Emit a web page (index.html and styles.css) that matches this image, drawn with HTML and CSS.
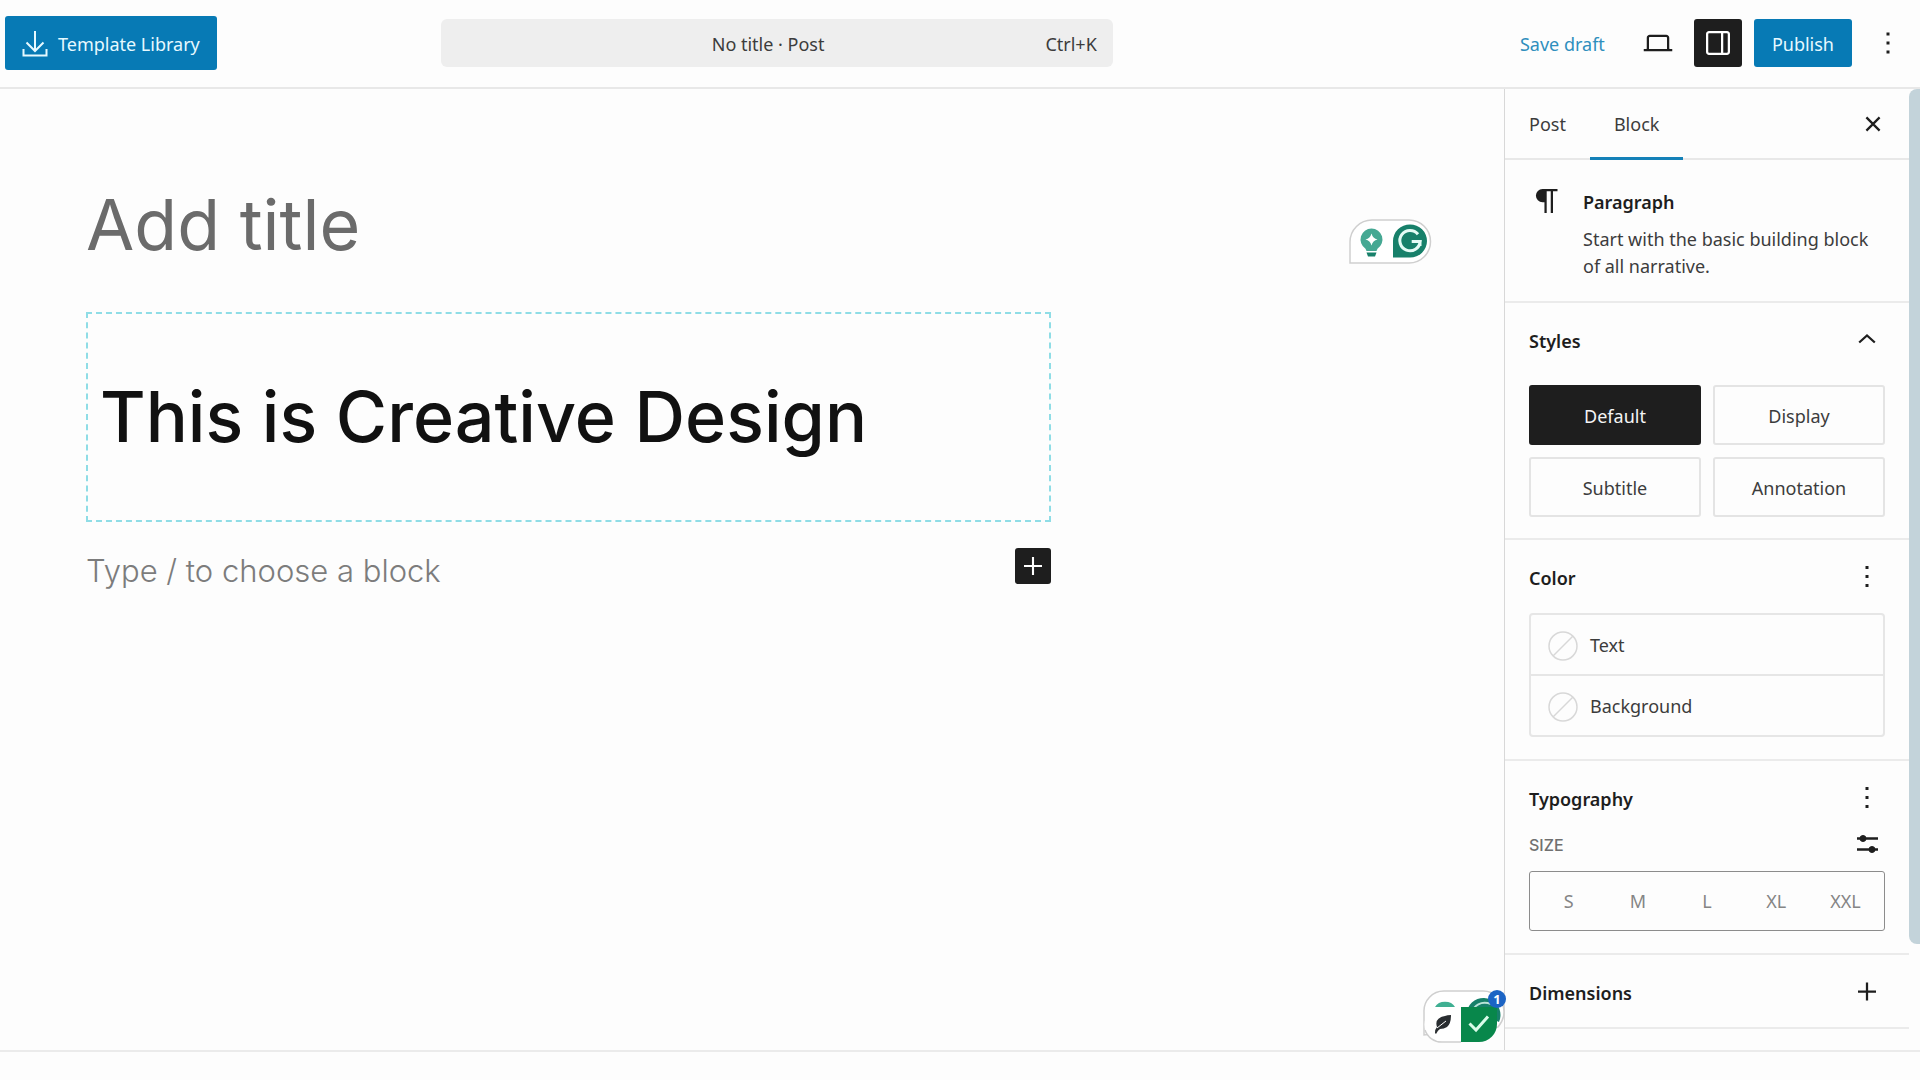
FILE: index.html
```html
<!DOCTYPE html>
<html lang="en">
<head>
	<meta charset="UTF-8">
	<title>Edit Post</title>
	<link rel="stylesheet" href="styles.css">
</head>
<body>
	<header class="header">
		<button class="btn btn-library">
			<svg width="26" height="28" viewBox="0 0 26 28" fill="none" stroke="currentColor" stroke-width="2"><path d="M13 0v20M4.500 11.500 13 20l8.500-8.500M1.500 18v6.500h23V18"/></svg>
			Template Library
		</button>
		<button class="search">
			<span class="search-title">No title · Post</span>
			<span>Ctrl+K</span>
		</button>
		<div class="actions">
			<button class="save">Save draft</button>
			<button class="icon-btn" aria-label="View">
				<svg width="36" height="36" viewBox="0 0 24 24"><path fill="currentColor" d="M20.500 16h-.7c-.1 0-.3-.1-.3-.3V8.500c0-1.100-.9-2-2-2h-11c-1.100 0-2 .9-2 2v7.200c0 .2-.1.3-.3.3h-1.700v1.500h19V16h-1zM6 8.500c0-.3.200-.5.500-.5h11c.3 0 .5.200.5.500v7.200c0 .1 0 .2 0 .3H6V8.500z"/></svg>
			</button>
			<button class="icon-btn dark" aria-label="Settings">
				<svg width="36" height="36" viewBox="0 0 24 24"><path fill="currentColor" fill-rule="evenodd" d="M18 4H6c-1.100 0-2 .9-2 2v12c0 1.100.9 2 2 2h12c1.100 0 2-.9 2-2V6c0-1.100-.9-2-2-2zm-4 14.500H6c-.3 0-.5-.2-.5-.5V6c0-.3.200-.5.500-.5h8v13zm4.500-.5c0 .3-.2.5-.5.500h-2.500v-13H18c.3 0 .5.200.5.500v12z"/></svg>
			</button>
			<button class="btn">Publish</button>
			<button class="icon-btn" aria-label="Options">
				<svg width="36" height="36" viewBox="0 0 24 24"><path fill="currentColor" d="M11 5h2v2h-2zM11 11h2v2h-2zM11 17h2v2h-2z"/></svg>
			</button>
		</div>
	</header>

	<div class="body">
		<main class="canvas">
			<div class="post">
				<input class="post-title" type="text" placeholder="Add title" aria-label="Add title">
				<div class="text-block">
					<p class="creative" contenteditable="true" spellcheck="false">This is Creative Design</p>
				</div>
				<div class="appender">
					<input class="appender-text" type="text" placeholder="Type / to choose a block" aria-label="Add block">
					<button class="add" aria-label="Add block">
						<svg width="36" height="36" viewBox="0 0 24 24"><path fill="currentColor" d="M11.300 6h1.400v5.300H18v1.400h-5.300V18h-1.400v-5.300H6v-1.400h5.300z"/></svg>
					</button>
				</div>
			</div>

			<!-- writing assistant, floats over the canvas -->
			<div class="assist assist-top">
				<svg width="84" height="46" viewBox="0 0 84 46">
					<path d="M1 44V23A22 22 0 0 1 23 1H60a21.500 21.500 0 0 1 0 43z" fill="#fff" stroke="#cfcfcf" stroke-width="1.500"/>
					<path d="M22.500 9.500a11 11 0 0 1 6 20.200l-1 2.300H17.500l-1-2.300a11 11 0 0 1 6-20.200z" fill="#45a893"/>
					<path d="M17.500 33.500h10l-1.500 4h-7z" fill="#17806a"/>
					<path d="M22.500 14.500q1.300 5 6 6-4.700 1-6 6-1.300-5-6-6 4.700-1 6-6z" fill="#fff"/>
					<path d="M44 38.500V22a17 16.500 0 1 1 17 16.500z" fill="#17806a"/>
					<path d="M69 15.200a10.200 10.200 0 1 0 2.200 7.300h-8.500M71 22.500V27" fill="none" stroke="#e4fbf5" stroke-width="3"/>
				</svg>
			</div>
			<div class="assist assist-bottom">
				<svg width="84" height="54" viewBox="0 0 84 54">
					<path d="M1 45V22A20 20 0 0 1 21 1H60a21 21 0 0 1 21 21q0 8-6 15z" fill="#fff" stroke="#cfcfcf" stroke-width="1.500"/>
					<path d="M12 17a11 9 0 0 1 20 0z" fill="#3faf92"/>
					<path d="M45 18a17 17 0 0 1 31 14z" fill="#17806a"/>
					<path d="M50 19q7-9 18-5" fill="none" stroke="#b9e3d8" stroke-width="2"/>
					<path d="M38 17H19a17.500 17.500 0 0 0 0 35h19z" fill="#fff"/>
					<path d="M2 40a17.500 17.500 0 0 0 17 12h19" fill="none" stroke="#cfcfcf" stroke-width="1.500"/>
					<path d="M38 17h36v17a18 18 0 0 1-18 18H38z" fill="#08874b"/>
					<path d="M46.500 33.500l6.500 6.500 12-13.500" fill="none" stroke="#d9fbe9" stroke-width="3"/>
					<path d="M12 43q0-4 2-6-3-9 8-11 2-1 6-1 0 9-4 12-3 2-7 2-2 1-4 5z" fill="#292d30"/>
					<path d="M14 38l9-7" stroke="#fff" stroke-width="1"/>
				</svg>
				<span class="badge">1</span>
			</div>
		</main>

		<aside class="sidebar">
			<div class="tabs">
				<button class="tab">Post</button>
				<button class="tab active">Block</button>
				<button class="icon-btn close" aria-label="Close Settings">
					<svg width="36" height="36" viewBox="0 0 24 24"><path fill="none" stroke="currentColor" stroke-width="1.500" d="M7.600 7.600l8.800 8.800M16.400 7.600l-8.800 8.800"/></svg>
				</button>
			</div>

			<section class="card">
				<svg width="36" height="36" viewBox="0 0 24 24"><path fill="currentColor" d="M9 4a4.400 4.400 0 0 0 0 8.800h1.300V20h1.500V5.500h2.700V20H16V5.500h3V4z"/></svg>
				<div>
					<h2>Paragraph</h2>
					<p>Start with the basic building block of all narrative.</p>
				</div>
			</section>

			<section class="panel styles-panel">
				<div class="panel-head">
					<h2>Styles</h2>
					<button class="small-btn" aria-label="Toggle Styles">
						<svg width="36" height="36" viewBox="0 0 24 24"><path fill="none" stroke="currentColor" stroke-width="1.500" d="M6.800 13 12 8.300 17.200 13"/></svg>
					</button>
				</div>
				<div class="styles">
					<button class="style-btn selected">Default</button>
					<button class="style-btn">Display</button>
					<button class="style-btn">Subtitle</button>
					<button class="style-btn">Annotation</button>
				</div>
			</section>

			<section class="panel">
				<div class="panel-head">
					<h2>Color</h2>
					<button class="small-btn" aria-label="Color options">
						<svg width="36" height="36" viewBox="0 0 24 24"><path fill="currentColor" d="M11 4h2v2h-2zM11 10h2v2h-2zM11 16h2v2h-2z"/></svg>
					</button>
				</div>
				<div class="colors">
					<button class="color-row">
						<svg width="30" height="30" viewBox="0 0 30 30" fill="none" stroke="#d8d8d8" stroke-width="1.500"><circle cx="15" cy="15" r="14"/><path d="M5 25 25 5"/></svg>
						Text
					</button>
					<button class="color-row">
						<svg width="30" height="30" viewBox="0 0 30 30" fill="none" stroke="#d8d8d8" stroke-width="1.500"><circle cx="15" cy="15" r="14"/><path d="M5 25 25 5"/></svg>
						Background
					</button>
				</div>
			</section>

			<section class="panel">
				<div class="panel-head typo-head">
					<h2>Typography</h2>
					<button class="small-btn" aria-label="Typography options">
						<svg width="36" height="36" viewBox="0 0 24 24"><path fill="currentColor" d="M11 4h2v2h-2zM11 10h2v2h-2zM11 16h2v2h-2z"/></svg>
					</button>
				</div>
				<div class="size-head">
					<span class="size-label">SIZE</span>
					<button class="small-btn" aria-label="Set custom size">
						<svg width="36" height="36" viewBox="0 0 36 36" fill="currentColor" stroke="currentColor"><path stroke-width="2.500" d="M8 11.500h21M8 22.500h21"/><circle cx="14" cy="11.500" r="3"/><circle cx="23" cy="22.500" r="3"/></svg>
					</button>
				</div>
				<div class="sizes">
					<button>S</button>
					<button>M</button>
					<button>L</button>
					<button>XL</button>
					<button>XXL</button>
				</div>
			</section>

			<section class="panel panel-closed">
				<div class="panel-head">
					<h2>Dimensions</h2>
					<button class="small-btn" aria-label="Dimensions options">
						<svg width="36" height="36" viewBox="0 0 24 24"><path fill="none" stroke="currentColor" stroke-width="1.500" d="M12 5v12M6 11h12"/></svg>
					</button>
				</div>
			</section>
		</aside>
		<div class="scroll"><div class="thumb"></div></div>
	</div>

	<footer class="footer"></footer>
</body>
</html>
```

FILE: styles.css
```css
*{
	box-sizing:border-box;
}
body{
	margin:0;
	height:100vh;
	display:flex;
	flex-direction:column;
	background:#fdfdfd;
	color:#1e1e1e;
	font-family:"Noto Sans","Open Sans",sans-serif;
	font-size:18px;
	line-height:27px;
	overflow:hidden;
}
h2,p{
	margin:0;
}
h2{
	font-size:18px;
	font-weight:600;
}
button,input{
	font:inherit;
	color:inherit;
	background:none;
	border:none;
	padding:0;
}
button{
	cursor:pointer;
}
input{
	outline:none;
}
svg{
	display:block;
	flex:none;
}

/* top bar */
.header{
	display:flex;
	align-items:center;
	height:89px;
	padding:0 8px 2px 5px;
	border-bottom:2px solid #e8e8e8;
	flex:none;
}
.btn{
	height:48px;
	padding:4px 18px 0;
	border-radius:3px;
	background:#077ab5;
	color:#e6f9ff;
	white-space:nowrap;
}
.btn-library{
	display:flex;
	align-items:center;
	gap:10px;
	height:54px;
	padding:4px 17px 0;
}
.search{
	display:flex;
	align-items:center;
	width:35vw;
	height:48px;
	margin-left:224px;
	padding:3px 16px 0;
	border-radius:6px;
	background:#eee;
	color:#3c3c3c;
}
.search-title{
	flex:1;
	padding-left:34px;
}
.actions{
	display:flex;
	align-items:center;
	gap:12px;
	margin-left:auto;
}
.save{
	padding:4px 17px 0;
	color:#2f8fbd;
	white-space:nowrap;
}
.icon-btn{
	display:flex;
	align-items:center;
	justify-content:center;
	width:48px;
	height:48px;
	border-radius:3px;
}
.dark{
	background:#1e1e1e;
	color:#fff;
}

/* editor */
.body{
	flex:1;
	display:flex;
	min-height:0;
}
.canvas{
	position:relative;
	flex:1;
	min-width:0;
	padding:87px 86px 0;
}
.post{
	max-width:965px;
	font-family:Inter,sans-serif;
}
.post-title{
	display:block;
	width:100%;
	height:96px;
	font-size:70px;
	font-weight:400;
}
.post-title::placeholder{
	color:#6b6b6b;
	opacity:1;
}
.text-block{
	margin-top:40px;
	padding:57px 12px;
	border:2px dashed #8fdde6;
}
.creative{
	font-size:70px;
	line-height:92px;
	font-weight:500;
	color:#111;
	outline:none;
}
.appender{
	display:flex;
	align-items:flex-start;
	gap:16px;
	margin-top:24px;
}
.appender-text{
	flex:1;
	height:48px;
	font-size:31px;
	font-weight:300;
}
.appender-text::placeholder{
	color:#7c7c7c;
	opacity:1;
}
.add{
	margin-top:2px;
	border-radius:3px;
	background:#1e1e1e;
	color:#fff;
}
.assist{
	position:absolute;
}
.assist-top{
	top:130px;
	right:71px;
}
.assist-bottom{
	right:-3px;
	bottom:6px;
}
.badge{
	position:absolute;
	top:0;
	right:1px;
	width:18px;
	height:18px;
	border-radius:50%;
	background:#1c64c4;
	color:#fff;
	font-size:13px;
	line-height:18px;
	font-weight:700;
	text-align:center;
}

/* settings sidebar */
.sidebar{
	width:405px;
	border-left:1px solid #d8d8d8;
	overflow:hidden;
	flex:none;
}
.tabs{
	display:flex;
	height:71px;
	border-bottom:2px solid #e8e8e8;
}
.tab{
	height:71px;
	padding:0 24px;
	color:#3c3c3c;
}
.active{
	border-bottom:3px solid #1481b8;
	padding-top:3px;
}
.close{
	align-self:center;
	margin:0 12px 0 auto;
}
.card{
	display:flex;
	gap:18px;
	padding:23px 24px;
	height:143px;
	border-bottom:2px solid #ebebeb;
}
.card h2{
	margin:6px 0 10px;
}
.card p{
	color:#3c3c3c;
}
.panel{
	padding:18px 24px 22px;
	border-bottom:2px solid #ebebeb;
}
.panel-head,.size-head{
	display:flex;
	align-items:center;
	justify-content:space-between;
}
.panel-head{
	height:40px;
	margin-bottom:15px;
}
.styles-panel{
	padding-bottom:21px;
}
.styles-panel .panel-head{
	margin-bottom:24px;
}
.typo-head{
	margin-bottom:8px;
}
.styles{
	display:grid;
	grid-template-columns:1fr 1fr;
	gap:12px;
}
.style-btn{
	height:60px;
	padding-top:2px;
	border:2px solid #e4e4e4;
	border-radius:3px;
	color:#3c3c3c;
}
.selected{
	background:#1e1e1e;
	border-color:#1e1e1e;
	color:#f4f4f4;
}
.colors{
	border:2px solid #e6e6e6;
	border-radius:4px;
}
.color-row{
	display:flex;
	align-items:center;
	gap:12px;
	width:100%;
	height:59px;
	padding:2px 17px 0;
	color:#3c3c3c;
}
.color-row + .color-row{
	height:61px;
	border-top:2px solid #e6e6e6;
}
.size-label{
	font-family:Inter,sans-serif;
	font-size:16px;
	font-weight:500;
	color:#707070;
}
.sizes{
	display:grid;
	grid-template-columns:repeat(5,1fr);
	height:60px;
	margin-top:8px;
	padding:0 4px;
	border:1px solid #8c8c8c;
	border-radius:3px;
	color:#858585;
}
.panel-closed{
	padding:18px 24px 14px;
}
.panel-closed .panel-head{
	margin-bottom:0;
}
.scroll{
	width:11px;
	flex:none;
}
.thumb{
	height:89%;
	border-radius:8px 0 0 8px;
	background:#c3d3da;
}
.footer{
	height:30px;
	border-top:2px solid #ebebeb;
	flex:none;
}
```
